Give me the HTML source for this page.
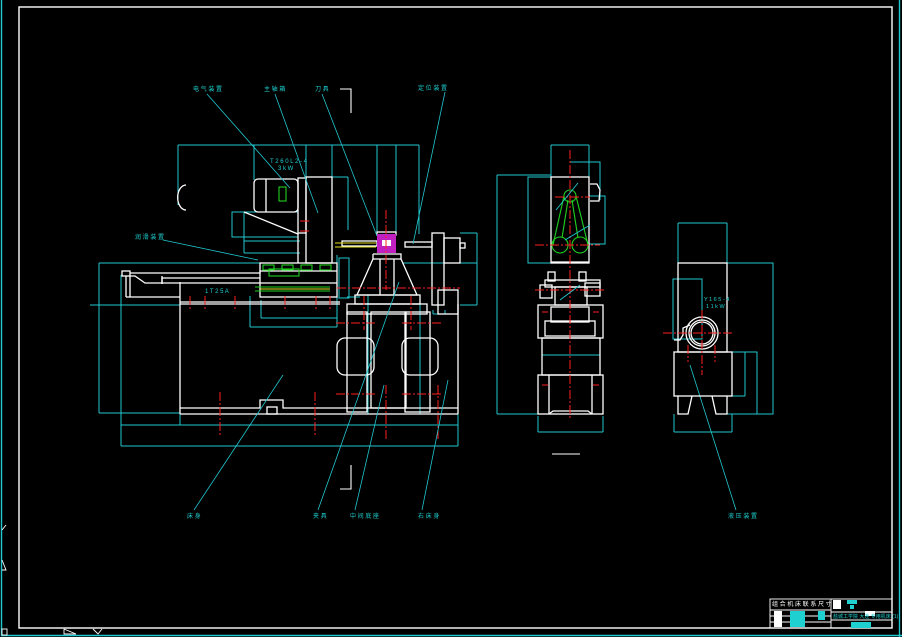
<!DOCTYPE html>
<html><head><meta charset="utf-8"><style>
html,body{margin:0;padding:0;background:#000;}
svg{display:block;}
text{font-family:"Liberation Sans","Noto Sans CJK SC",sans-serif;fill:#1fd0d0;font-size:6px;}
</style></head><body>
<svg width="902" height="637" viewBox="0 0 902 637" xmlns="http://www.w3.org/2000/svg">
<rect width="902" height="637" fill="#000"/>
<g fill="none" stroke-width="1.4">
<polyline points="1.5,0 1.5,635.5 902,635.5" stroke="#20c8d0"/>
<line x1="899.5" y1="0" x2="899.5" y2="637" stroke="#20c8d0"/>
<rect x="19" y="7" width="873" height="621" stroke="#fff"/>
</g>
<g fill="none" stroke="#fff" stroke-width="0.9">
<polyline points="2,530 6,525"/><polyline points="2,560 6,570 2,570"/>
<rect x="2" y="629" width="5" height="6"/>
<polyline points="64,629 76,634 64,634 64,629"/>
<polyline points="93,629 98,634 102,629"/>
</g>

<!-- LEFT VIEW -->
<g fill="none" stroke="#20c8d0" stroke-width="1">
<line x1="178" y1="145" x2="419" y2="145"/>
<line x1="178" y1="145" x2="178" y2="205"/>
<line x1="254" y1="145" x2="254" y2="180"/>
<line x1="306" y1="145" x2="306" y2="178"/>
<line x1="332" y1="145" x2="332" y2="178"/>
<line x1="377" y1="145" x2="377" y2="234"/>
<line x1="396" y1="145" x2="396" y2="234"/>
<line x1="419" y1="145" x2="419" y2="234"/>
<line x1="332" y1="177" x2="348" y2="177"/><line x1="348" y1="177" x2="348" y2="230"/>
<rect x="232" y="212" width="66" height="25"/>
<line x1="244" y1="241" x2="300" y2="241"/>
<line x1="244" y1="212" x2="244" y2="253"/>
<line x1="244" y1="253" x2="300" y2="253"/>
<polyline points="99,263 260,263"/>
<line x1="99" y1="263" x2="99" y2="413"/>
<line x1="99" y1="413" x2="180" y2="413"/>
<line x1="121" y1="275" x2="121" y2="446"/>
<line x1="121" y1="425" x2="458" y2="425"/>
<line x1="121" y1="446" x2="458" y2="446"/>
<line x1="458" y1="304" x2="458" y2="446"/>
<line x1="180" y1="414" x2="180" y2="425"/>
<line x1="90" y1="305" x2="180" y2="305"/>
<line x1="250" y1="296" x2="250" y2="327"/>
<line x1="250" y1="327" x2="337" y2="327"/>
<line x1="261" y1="300" x2="261" y2="318"/><line x1="261" y1="318" x2="337" y2="318"/>
<line x1="337" y1="255" x2="337" y2="327"/>
<rect x="339" y="258" width="10" height="40"/>
<line x1="402" y1="263" x2="477" y2="263"/>
<line x1="477" y1="233" x2="477" y2="305"/>
<line x1="460" y1="233" x2="477" y2="233"/>
<line x1="460" y1="305" x2="477" y2="305"/>
<line x1="433" y1="310" x2="433" y2="314"/><line x1="433" y1="314" x2="445" y2="314"/><line x1="445" y1="310" x2="445" y2="314"/>
<line x1="368" y1="295" x2="368" y2="414"/>
<line x1="420" y1="295" x2="420" y2="414"/>
<line x1="347" y1="297" x2="360" y2="297"/>
</g>
<g fill="none" stroke="#fff" stroke-width="1.3">
<path d="M186,185 A8,12 0 0 0 186,210"/>
<rect x="254" y="179" width="44" height="33" rx="4"/>
<line x1="266" y1="179" x2="266" y2="212"/>
<rect x="298" y="178" width="8" height="55"/>
<rect x="306" y="177" width="26" height="86"/>
<polyline points="244,212 298,234"/>
<line x1="298" y1="233" x2="298" y2="263"/>
<rect x="122" y="271" width="8" height="5"/>
<polyline points="130,273 260,273 260,271 337,271"/>
<polyline points="130,276 135,276 145,283 162,283 162,276"/>
<polyline points="162,284 162,278 260,278"/>
<line x1="162" y1="283" x2="250" y2="283"/>
<line x1="126" y1="276" x2="126" y2="297"/>
<line x1="130" y1="276" x2="130" y2="297"/>
<line x1="126" y1="297" x2="180" y2="297"/>
<line x1="180" y1="282" x2="180" y2="414"/>
<rect x="260" y="263" width="77" height="34"/>
<line x1="250" y1="283" x2="337" y2="283"/>
<line x1="180" y1="304" x2="340" y2="304"/>
<line x1="180" y1="302" x2="340" y2="302"/>
<polyline points="180,408 260,408 260,400 283,400 283,408 458,408"/>
<rect x="267" y="407" width="10" height="7"/>
<line x1="180" y1="414" x2="458" y2="414"/>
<line x1="458" y1="304" x2="458" y2="414"/>
<polyline points="373,254 401,254 401,259 373,259 373,254"/>
<polyline points="373,259 357,295 417,295 401,259"/>
<line x1="380" y1="259" x2="380" y2="295"/>
<line x1="394" y1="259" x2="394" y2="295"/>
<rect x="355" y="295" width="65" height="9"/>
<rect x="347" y="304" width="80" height="10"/>
<rect x="347" y="312" width="20" height="100"/>
<rect x="371" y="312" width="35" height="96"/>
<rect x="405" y="312" width="25" height="100"/>
<rect x="337" y="338" width="37" height="37" rx="8"/>
<rect x="402" y="338" width="36" height="37" rx="8"/>
<rect x="432" y="233" width="12" height="72"/>
<rect x="444" y="238" width="16" height="25"/>
<rect x="460" y="243" width="5" height="5"/>
<rect x="438" y="290" width="20" height="24"/>
<rect x="342" y="241" width="35" height="5"/>
<rect x="405" y="242" width="27" height="5"/>
<rect x="377" y="232" width="19" height="3"/>
</g>
<rect x="377" y="234" width="19" height="19" fill="#c020c0"/>
<rect x="382" y="240" width="9" height="6" fill="#fff"/>
<g fill="none" stroke="#20d020" stroke-width="1.1">
<rect x="279" y="187" width="7" height="14"/>
<rect x="263" y="265" width="11" height="5"/><rect x="282" y="265" width="11" height="5"/>
<rect x="301" y="265" width="11" height="5"/><rect x="320" y="265" width="11" height="5"/>
<rect x="269" y="269" width="30" height="7"/>
<line x1="255" y1="287" x2="330" y2="287"/><line x1="255" y1="291" x2="330" y2="291"/>
</g>
<g fill="none" stroke="#e0e020" stroke-width="0.9">
<line x1="335" y1="243" x2="376" y2="243"/><line x1="335" y1="247" x2="376" y2="247"/>
<line x1="260" y1="289" x2="330" y2="289"/>
</g>
<g stroke="#ff2020" stroke-width="1" stroke-dasharray="9,2,2,2">
<line x1="300" y1="221" x2="310" y2="221"/><line x1="300" y1="231" x2="310" y2="231"/>
<line x1="386" y1="210" x2="386" y2="290"/>
<line x1="337" y1="288" x2="460" y2="288"/>
<line x1="336" y1="323" x2="376" y2="323"/><line x1="402" y1="323" x2="441" y2="323"/>
<line x1="336" y1="394" x2="376" y2="394"/><line x1="402" y1="394" x2="441" y2="394"/>
<line x1="220" y1="392" x2="220" y2="435"/><line x1="315" y1="392" x2="315" y2="435"/>
<line x1="386" y1="385" x2="386" y2="440"/><line x1="438" y1="385" x2="438" y2="440"/>
<line x1="190" y1="296" x2="190" y2="310"/><line x1="205" y1="296" x2="205" y2="310"/>
<line x1="235" y1="296" x2="235" y2="310"/><line x1="285" y1="296" x2="285" y2="310"/>
<line x1="316" y1="296" x2="316" y2="310"/><line x1="330" y1="296" x2="330" y2="310"/>
<line x1="364" y1="296" x2="364" y2="330"/><line x1="411" y1="296" x2="411" y2="330"/>
</g>
<g fill="none" stroke="#fff" stroke-width="1.1">
<polyline points="340,89 351,89 351,113"/>
<polyline points="340,489 351,489 351,465"/>
</g>
<g stroke="#20c8d0" stroke-width="0.8">
<line x1="207" y1="94" x2="290" y2="188"/>
<line x1="275" y1="94" x2="318" y2="213"/>
<line x1="322" y1="94" x2="377" y2="236"/>
<line x1="445" y1="92" x2="413" y2="244"/>
<line x1="163" y1="240" x2="258" y2="260"/>
<line x1="194" y1="510" x2="283" y2="375"/>
<line x1="318" y1="510" x2="399" y2="282"/>
<line x1="355" y1="510" x2="384" y2="385"/>
<line x1="422" y1="510" x2="448" y2="380"/>
<line x1="736" y1="510" x2="690" y2="365"/>
</g>
<text x="193" y="91">电 气 装 置</text>
<text x="264" y="91">主 轴 箱</text>
<text x="315" y="91">刀 具</text>
<text x="418" y="90">定 位 装 置</text>
<text x="135" y="239">润 滑 装 置</text>
<text x="205" y="293">1 T 2 5 A</text>
<text x="270" y="163">T 2 6 0 L 2 - 4</text>
<text x="278" y="170">3 k W</text>
<text x="187" y="518">床 身</text>
<text x="313" y="518">夹 具</text>
<text x="350" y="518">中 间 底 座</text>
<text x="418" y="518">右 床 身</text>
<text x="728" y="518">液 压 装 置</text>

<!-- MIDDLE VIEW -->
<g fill="none" stroke="#20c8d0" stroke-width="1">
<line x1="551" y1="145" x2="589" y2="145"/>
<line x1="551" y1="145" x2="551" y2="177"/><line x1="589" y1="145" x2="589" y2="177"/>
<polyline points="570,162 600,162 600,200"/>
<line x1="497" y1="175" x2="551" y2="175"/>
<line x1="497" y1="175" x2="497" y2="414"/>
<line x1="497" y1="414" x2="538" y2="414"/>
<rect x="528" y="177" width="23" height="86"/>
<polyline points="589,196 605,196 605,244 589,244"/>
<line x1="538" y1="416" x2="538" y2="432"/><line x1="603" y1="416" x2="603" y2="432"/>
<line x1="538" y1="432" x2="603" y2="432"/>
<line x1="542" y1="355" x2="600" y2="355"/>
</g>
<g fill="none" stroke="#fff" stroke-width="1.3">
<rect x="551" y="177" width="38" height="86"/>
<line x1="551" y1="262" x2="589" y2="262"/>
<polyline points="590,184 597,184 600,190 599,201 590,201"/>
<rect x="548" y="272" width="7" height="9"/><rect x="579" y="272" width="7" height="9"/>
<rect x="545" y="280" width="55" height="7"/>
<rect x="540" y="285" width="12" height="13"/><rect x="585" y="283" width="15" height="13"/>
<rect x="555" y="287" width="32" height="18"/>
<rect x="538" y="305" width="65" height="33"/>
<rect x="551" y="307" width="38" height="15"/>
<rect x="545" y="321" width="50" height="15"/>
<rect x="542" y="338" width="58" height="37"/>
<rect x="538" y="375" width="65" height="39"/>
<line x1="549" y1="375" x2="549" y2="414"/><line x1="592" y1="375" x2="592" y2="414"/>
<polyline points="549,414 553,411 588,411 592,414"/>
</g>
<g fill="none" stroke="#20d020" stroke-width="1.1">
<circle cx="570" cy="196" r="6"/>
<circle cx="560" cy="245" r="8"/><circle cx="580" cy="245" r="8"/>
<polyline points="564,196 553,245"/><polyline points="576,196 588,245"/>
<polyline points="568,200 562,238"/><polyline points="572,200 578,238"/>
</g>
<g stroke="#ff2020" stroke-width="1" stroke-dasharray="9,2,2,2">
<line x1="570" y1="150" x2="570" y2="420"/>
<line x1="555" y1="197" x2="590" y2="197"/>
<line x1="535" y1="245" x2="600" y2="245"/>
<line x1="535" y1="290" x2="605" y2="290"/>
<line x1="542" y1="312" x2="548" y2="312"/><line x1="593" y1="312" x2="599" y2="312"/>
<line x1="542" y1="385" x2="548" y2="385"/><line x1="593" y1="385" x2="599" y2="385"/>
</g>
<g stroke="#20c8d0" stroke-width="0.9"><line x1="556" y1="210" x2="578" y2="183"/><line x1="565" y1="240" x2="590" y2="225"/><line x1="560" y1="300" x2="580" y2="285"/></g>
<g fill="none" stroke="#fff" stroke-width="1"><line x1="552" y1="454" x2="580" y2="454"/></g>

<!-- RIGHT VIEW -->
<g fill="none" stroke="#20c8d0" stroke-width="1">
<line x1="678" y1="223" x2="727" y2="223"/>
<line x1="678" y1="223" x2="678" y2="263"/><line x1="727" y1="223" x2="727" y2="263"/>
<polyline points="727,263 773,263 773,414 722,414"/>
<polyline points="732,352 757,352 757,414"/>
<line x1="732" y1="396" x2="745" y2="396"/><line x1="745" y1="352" x2="745" y2="396"/>
<rect x="673" y="279" width="29" height="60"/>
<line x1="674" y1="414" x2="674" y2="432"/><line x1="732" y1="414" x2="732" y2="432"/>
<line x1="674" y1="432" x2="732" y2="432"/>
</g>
<g fill="none" stroke="#fff" stroke-width="1.3">
<rect x="678" y="263" width="49" height="89"/>
<circle cx="702" cy="333" r="16"/><circle cx="702" cy="333" r="13"/><circle cx="702" cy="333" r="11"/>
<polyline points="674,340 680,340 683,335 683,328 690,325"/>
<rect x="674" y="352" width="58" height="44"/>
<polyline points="678,396 678,414 688,414 692,396"/>
<polyline points="712,396 716,414 727,414 727,396"/>
</g>
<g stroke="#ff2020" stroke-width="1" stroke-dasharray="9,2,2,2">
<line x1="663" y1="333" x2="732" y2="333"/>
<line x1="702" y1="310" x2="702" y2="375"/>
<line x1="688" y1="345" x2="688" y2="362"/><line x1="715" y1="345" x2="715" y2="362"/>
</g>
<text x="704" y="301" style="font-size:5.5px">Y 1 6 5 - 4</text>
<text x="706" y="308" style="font-size:5.5px">1 1 k W</text>

<!-- TITLE BLOCK -->
<g fill="none" stroke="#fff" stroke-width="0.9">
<rect x="770" y="599" width="122" height="29"/>
<line x1="770" y1="610" x2="831" y2="610"/>
<line x1="770" y1="616" x2="831" y2="616"/>
<line x1="770" y1="622" x2="831" y2="622"/>
<line x1="831" y1="599" x2="831" y2="628"/>
<line x1="831" y1="612" x2="892" y2="612"/>
<line x1="831" y1="620" x2="892" y2="620"/>
</g>
<rect x="774" y="611" width="8" height="16" fill="#fff"/>
<rect x="790" y="611" width="15" height="16" fill="#1fd0d0"/>
<rect x="818" y="611" width="7" height="9" fill="#1fd0d0"/>
<rect x="833" y="600" width="8" height="9" fill="#fff"/>
<rect x="847" y="600" width="10" height="4" fill="#1fd0d0"/>
<rect x="850" y="605" width="4" height="4" fill="#1fd0d0"/>
<rect x="865" y="611" width="10" height="5" fill="#fff"/>
<rect x="851" y="622" width="20" height="6" fill="#1fd0d0"/>
<text x="772" y="606" style="fill:#fff;font-size:6px">组 合 机 床 联 系 尺 寸 图</text>
<text x="833" y="618" style="font-size:5px">盐城工学院 大连 专用机床 (1)</text>
</svg>
</body></html>
